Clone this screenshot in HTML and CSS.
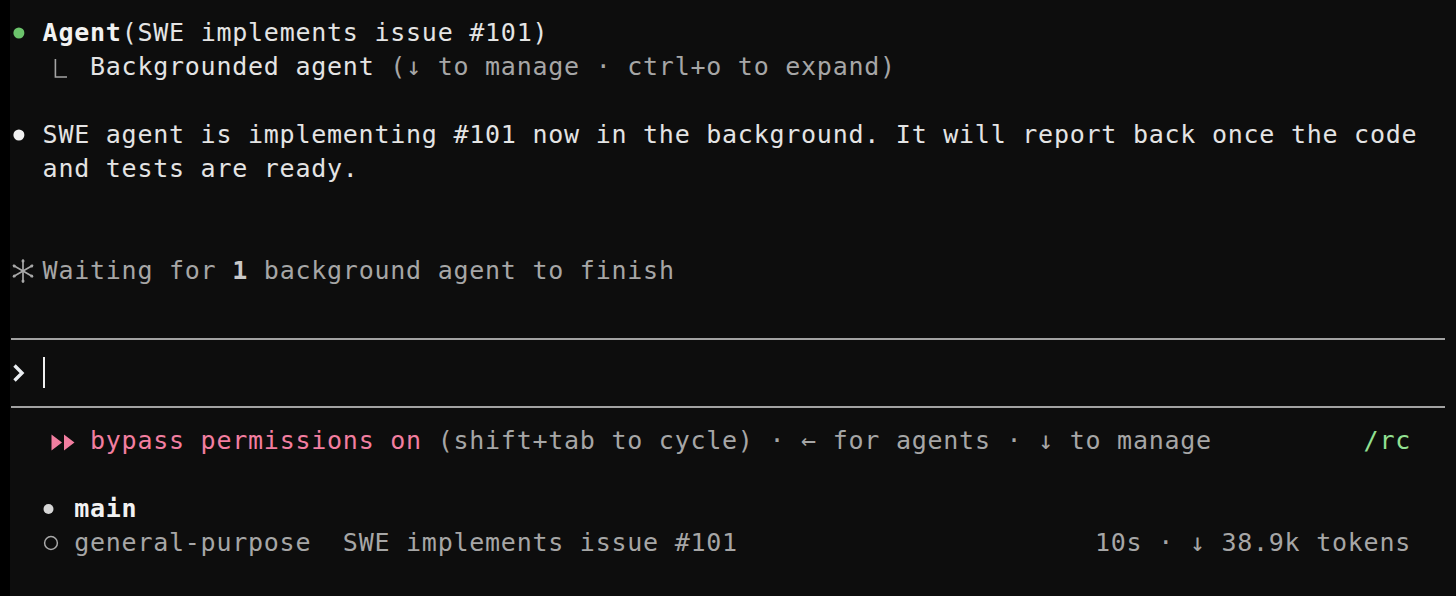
FILE: index.html
```html
<!DOCTYPE html>
<html lang="en">
<head>
<meta charset="utf-8">
<title>Terminal</title>
<link rel="stylesheet" href="styles.css">
</head>
<body>
<div class="screen">
  <div class="edge"></div>
  <div class="term">
    <div class="line"><svg class="cell" viewBox="0 0 15.8 34"><circle cx="7.9" cy="17" r="5.5" fill="#6cc46c"/></svg> <b class="strong">Agent</b>(SWE implements issue #101)</div>
    <div class="line">  <svg class="cell2" viewBox="0 0 31.6 34"><path d="M12.4 9 V27 H24" fill="none" stroke="#a4a4a4" stroke-width="1.6"/></svg> Backgrounded agent <span class="dim">(↓ to manage · ctrl+o to expand)</span></div>
    <div class="line"></div>
    <div class="line"><svg class="cell" viewBox="0 0 15.8 34"><circle cx="7.9" cy="17" r="5.5" fill="#f2f2f2"/></svg> SWE agent is implementing #101 now in the background. It will report back once the code</div>
    <div class="line">  and tests are ready.</div>
    <div class="line"></div>
    <div class="line"></div>
    <div class="line"><svg class="cell" viewBox="0 0 15.8 34"><g stroke="#a8a8a8" stroke-width="1.7" stroke-linecap="round"><path d="M12 6 V28"/><path d="M2.5 11.5 L21.5 22.5"/><path d="M2.5 22.5 L21.5 11.5"/></g><g fill="#a8a8a8"><circle cx="12" cy="7" r="1.5"/><circle cx="12" cy="27" r="1.5"/><circle cx="3.3" cy="12" r="1.5"/><circle cx="20.7" cy="22" r="1.5"/><circle cx="3.3" cy="22" r="1.5"/><circle cx="20.7" cy="12" r="1.5"/></g></svg> <span class="dim">Waiting for <b class="num">1</b> background agent to finish</span></div>
    <div class="line"></div>
    <div class="rule-row"><div class="rule"></div></div>
    <div class="line"><svg class="cell" viewBox="0 0 15.8 34"><path d="M3.5 9.5 L11 17 L3.5 24.5" fill="none" stroke="#eaeef2" stroke-width="3.4" stroke-linejoin="miter"/></svg> <span class="cursor"></span></div>
    <div class="rule-row"><div class="rule"></div></div>
    <div class="line split"><span>  <svg class="cell2" viewBox="0 0 31.6 34"><path d="M8.5 10.5 L19 18.5 L8.5 26.5 Z M21 10.5 L31.5 18.5 L21 26.5 Z" fill="#f27ea0"/></svg> <span class="pink">bypass permissions on</span><span class="dim"> (shift+tab to cycle) · ← for agents · ↓ to manage</span></span><span class="green">/rc</span></div>
    <div class="line"></div>
    <div class="line">  <svg class="cell" viewBox="0 0 15.8 34"><circle cx="5.5" cy="17" r="5" fill="#d6d6d6"/></svg> <b class="strong">main</b></div>
    <div class="line split dim"><span>  <svg class="cell" viewBox="0 0 15.8 34"><circle cx="8" cy="17" r="6.4" fill="none" stroke="#a8a8a8" stroke-width="1.5"/></svg> general-purpose  SWE implements issue #101</span><span>10s · ↓ 38.9k tokens</span></div>
  </div>
</div>
</body>
</html>
```

FILE: styles.css
```css
html, body {
  margin: 0;
  padding: 0;
  background: #0c0c0c;
}

.screen {
  display: flex;
  width: 1456px;
  height: 596px;
  overflow: hidden;
  background: #0d0d0d;
}

.edge {
  flex: none;
  width: 10px;
  background: #000;
}

.term {
  flex: 1;
  padding: 16px 0 0 1px;
  font-family: "DejaVu Sans Mono", "Liberation Mono", monospace;
  font-size: 25px;
  letter-spacing: 0.75px;
  line-height: 34px;
  color: #e4e4e4;
}

.line {
  height: 34px;
  white-space: pre;
}

.split {
  display: flex;
  justify-content: space-between;
  width: 1400px;
}

.cell {
  display: inline-block;
  width: 15.8px;
  height: 34px;
  vertical-align: top;
  overflow: visible;
}

.cell2 {
  display: inline-block;
  width: 31.6px;
  height: 34px;
  vertical-align: top;
  overflow: visible;
}

.strong {
  font-weight: bold;
  color: #f2f2f2;
}

.dim {
  color: #a6a6a6;
}

.num {
  font-weight: bold;
  color: #c8c8c8;
}

.pink {
  color: #f27ea0;
}

.green {
  color: #92e092;
}

.cursor {
  display: inline-block;
  width: 2px;
  height: 31px;
  margin-top: 1px;
  vertical-align: top;
  background: #f0f0f0;
}

.rule-row {
  height: 34px;
  display: flex;
  align-items: center;
  padding-right: 11px;
}

.rule {
  flex: 1;
  height: 2px;
  background: #a2a2a2;
}
```
